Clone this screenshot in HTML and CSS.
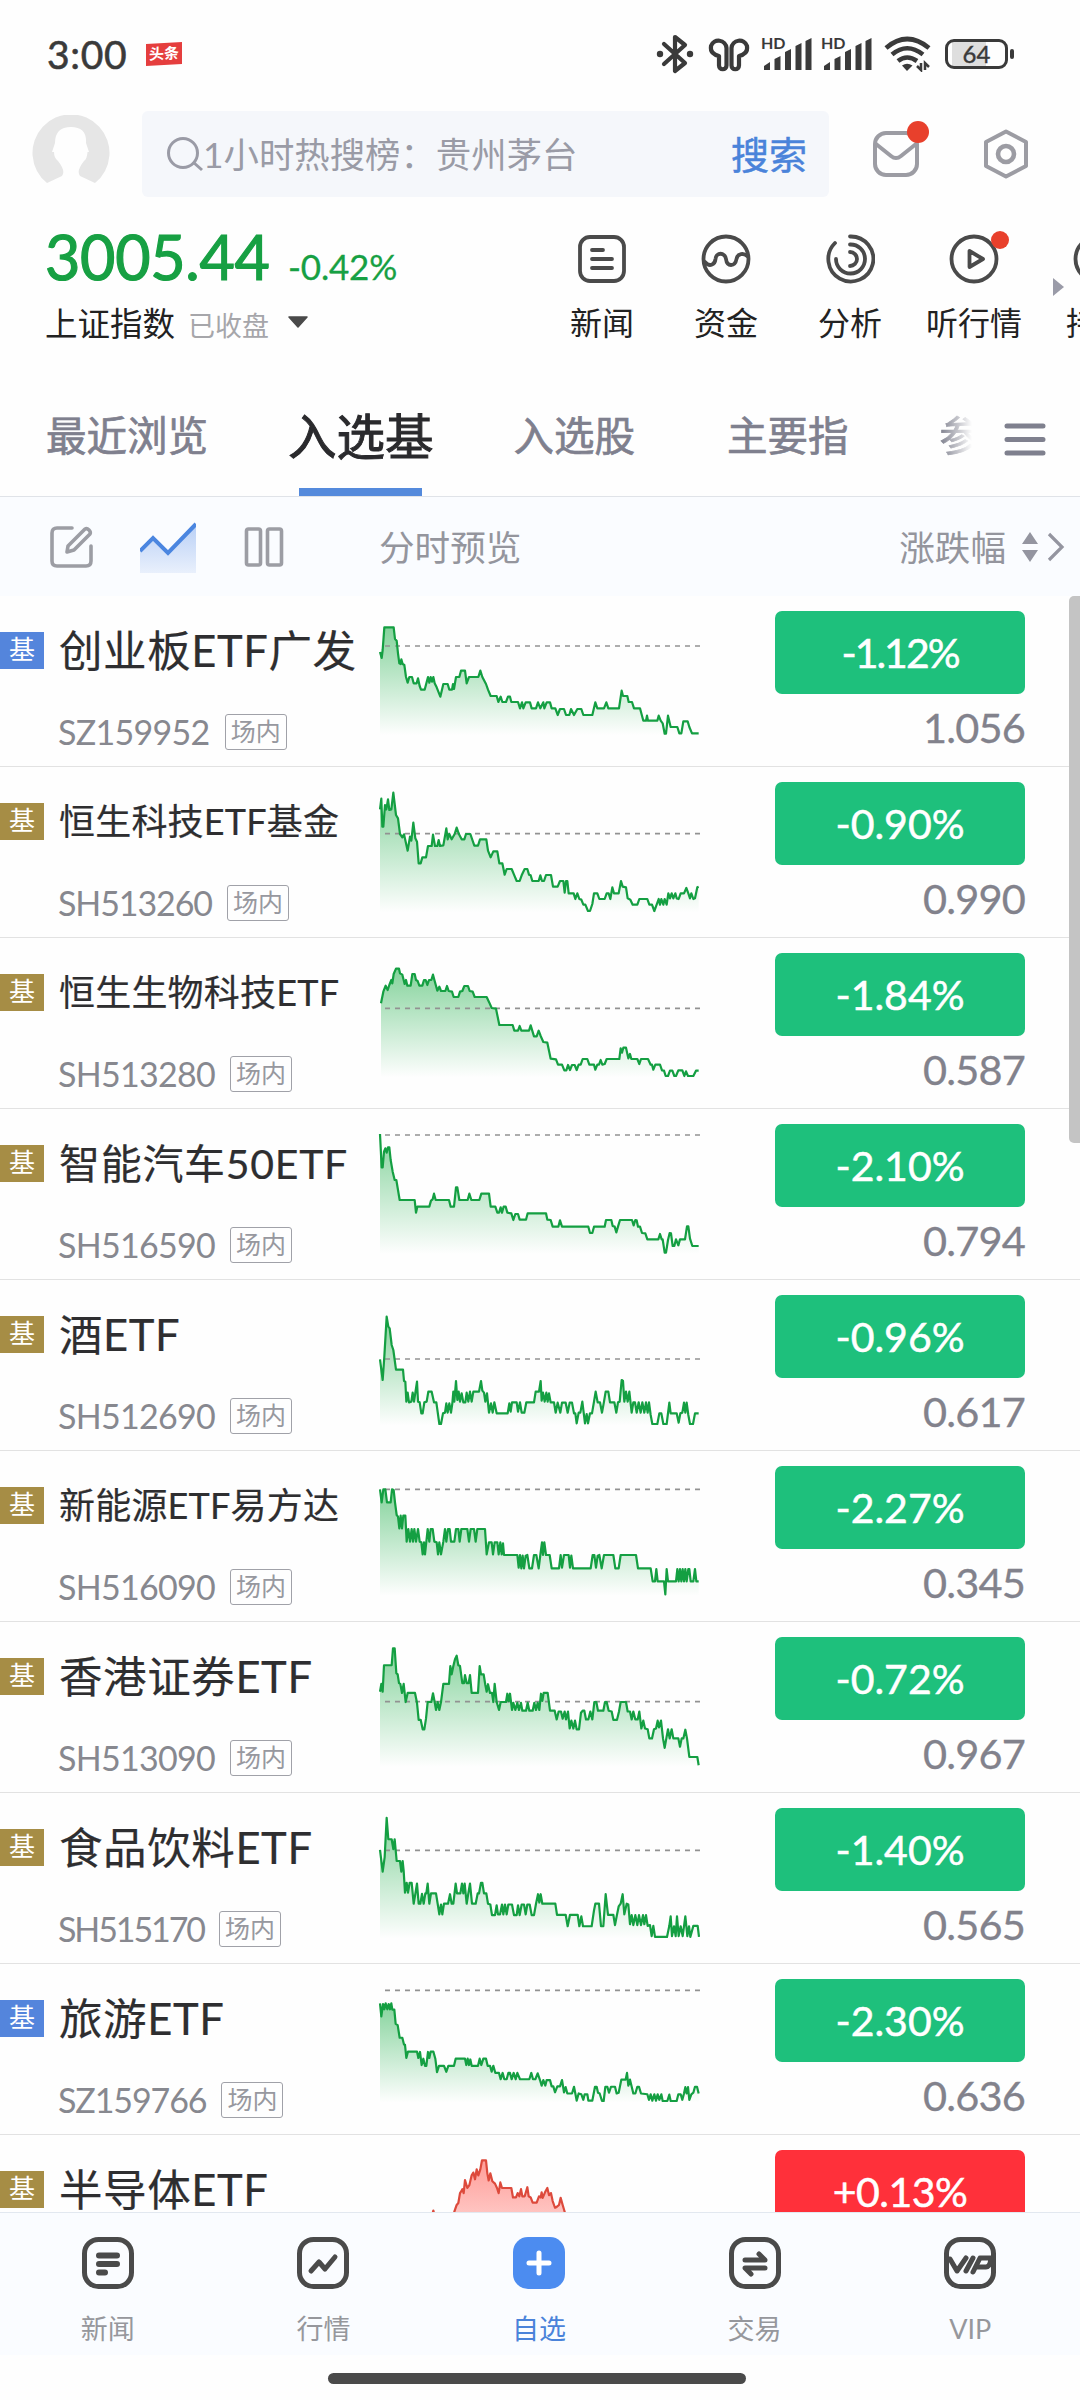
FILE: index.html
```html
<!DOCTYPE html>
<html lang="zh-CN">
<head>
<meta charset="utf-8">
<title>自选</title>
<link rel="stylesheet" href="styles.css">
</head>
<body>
<div class="app">
  <header class="status">
    <span class="time">3:00</span>
    <span class="news-tag">头条</span>
    <div class="status-icons">
      <svg class="bt" width="38" height="40" viewBox="0 0 38 40"><path d="M8 10 29 29 19 37V3l10 8L8 30" fill="none" stroke="#3a3a3a" stroke-width="4.2" stroke-linejoin="round" stroke-linecap="round"/><circle cx="4" cy="20" r="3.2" fill="#3a3a3a"/><circle cx="34" cy="20" r="3.2" fill="#3a3a3a"/></svg>
      <svg class="buds" width="42" height="36" viewBox="0 0 42 36"><g fill="none" stroke="#3a3a3a" stroke-width="4.2" stroke-linejoin="round"><path d="M18.5 12A8 8 0 0 0 3 10C2 16 6 19 11 20V29.500a3.700 3.700 0 0 0 7.500 0Z"/><path d="M23.500 12A8 8 0 0 1 39 10C40 16 36 19 31 20V29.500a3.700 3.700 0 0 1-7.500 0Z"/></g></svg>
      <div class="signal"><span>HD</span><svg width="50" height="34" viewBox="0 0 50 34"><path d="M2 33V29l6-4V33ZM12.500 33V22l6-3V33ZM23 33V15l6-3V33ZM33.500 33V9l6-3V33ZM43.500 33V4l6-3V33Z" fill="#3a3a3a"/></svg></div>
      <div class="signal"><span>HD</span><svg width="50" height="34" viewBox="0 0 50 34"><path d="M2 33V29l6-4V33ZM12.500 33V22l6-3V33ZM23 33V15l6-3V33ZM33.500 33V9l6-3V33ZM43.500 33V4l6-3V33Z" fill="#3a3a3a"/></svg></div>
      <svg class="wifi" width="48" height="36" viewBox="0 0 48 36"><g fill="none" stroke="#3a3a3a" stroke-width="4.600"><path d="M2 12Q23 -6 45 12"/><path d="M8 18.500Q23 6 39 18.500"/><path d="M14 25Q23 18 33 25"/></g><path d="M18 29.500Q23 26 28.500 29.500L23 35Z" fill="#3a3a3a"/><path d="M37 27v7l-4-4M41 34v-7l4 4" fill="none" stroke="#3a3a3a" stroke-width="2.500"/></svg>
      <div class="battery"><span>64</span></div>
    </div>
  </header>

  <div class="search-row">
    <svg class="avatar" width="78" height="78" viewBox="0 0 78 78"><path d="M15 68A38.500 38.500 0 1 1 63 68L48 61Q44 56 52 46Q55 44 55.500 37H57L54 28Q55 12 39 12Q23 12 23 28L20 37H22Q22 43 26 46Q34 56 30 61Z" fill="#e6e6e6"/></svg>
    <div class="search">
      <svg width="38" height="36" viewBox="0 0 38 36"><circle cx="17" cy="17" r="14.500" fill="none" stroke="#9a9ba6" stroke-width="3"/><path d="M27 26 36 34" stroke="#9a9ba6" stroke-width="3"/></svg>
      <span class="hint">1小时热搜榜：贵州茅台</span>
      <span class="go">搜索</span>
    </div>
    <div class="mail"><svg width="46" height="46" viewBox="0 0 46 46"><rect x="2" y="2" width="42" height="42" rx="11" fill="none" stroke="#9c9ca3" stroke-width="4"/><path d="M3 13 18 25Q23 29 28 25L43 13" fill="none" stroke="#9c9ca3" stroke-width="4"/></svg><i class="dot"></i></div>
    <svg class="hex" width="46" height="52" viewBox="0 0 46 52"><path d="M23 3.500 43 14V38L23 48.500 3 38V14Z" fill="none" stroke="#9c9ca3" stroke-width="4" stroke-linejoin="round"/><circle cx="23" cy="26" r="8" fill="none" stroke="#9c9ca3" stroke-width="4.600"/></svg>
  </div>

  <section class="overview">
    <div class="index">
      <div class="index-top"><b>3005.44</b><span>-0.42%</span></div>
      <div class="index-sub"><span>上证指数</span><em>已收盘</em><svg width="22" height="12" viewBox="0 0 22 12"><path d="M2 1H20L11 11Z" fill="#4a4a4a" stroke="#4a4a4a" stroke-width="1.500" stroke-linejoin="round"/></svg></div>
    </div>
    <nav class="quick">
      <a><svg width="50" height="50" viewBox="0 0 50 50"><rect x="3" y="3" width="44" height="44" rx="10"/><path d="M15 16h11M15 25h20M15 34h20"/></svg><span>新闻</span></a>
      <a><svg width="50" height="50" viewBox="0 0 50 50"><circle cx="25" cy="25" r="22.500"/><path d="M4 28C9 34 14 30 14.500 25C15 18 24 18 25 25C26 33 34 33 35.500 25C36.500 19 43 19 46 22"/></svg><span>资金</span></a>
      <a><svg width="50" height="50" viewBox="0 0 50 50"><path d="M10 9A22.500 22.500 0 1 0 25 2.500M11 25A14.500 14.500 0 1 0 25 10.500M25 18A7 7 0 1 1 25 32"/></svg><span>分析</span></a>
      <a><svg width="50" height="50" viewBox="0 0 50 50"><circle cx="25" cy="25" r="22.500"/><path d="M20.500 17V33L34 25Z" stroke-linejoin="round"/></svg><span>听行情</span><i class="dot small"></i></a>
      <a><svg width="50" height="50" viewBox="0 0 50 50"><circle cx="25" cy="25" r="22.500"/></svg><span>持仓</span></a>
      <svg class="more" width="14" height="22" viewBox="0 0 14 22"><path d="M1 2V20L12 11Z" fill="#9a9ba8"/></svg>
    </nav>
  </section>

  <nav class="tabs">
    <a class="recent">最近浏览</a>
    <a class="active">入选基</a>
    <a class="stocks">入选股</a>
    <a class="main-idx">主要指</a>
    <a class="fade">参</a>
    <svg width="42" height="34" viewBox="0 0 42 34"><path d="M3 4H39M3 17.500H39M3 31H39" stroke="#7f808e" stroke-width="5" stroke-linecap="round"/></svg>
  </nav>

  <div class="toolbar">
    <svg class="edit" width="46" height="46" viewBox="0 0 46 46"><g fill="none" stroke="#9c9da4" stroke-width="3.600" stroke-linecap="round" stroke-linejoin="round"><path d="M23 4H8Q3 4 3 9V37Q3 42 8 42H37Q42 42 42 37V22"/><path d="M19 22 36 5Q38 4 40 6T41 10L25 26L18 28Z"/></g></svg>
    <svg class="trend" width="56" height="52" viewBox="0 0 56 52"><defs><linearGradient id="trend-fill" x1="0" y1="0" x2="0" y2="1"><stop offset="0" stop-color="#b9d0f6"/><stop offset="1" stop-color="#e9f0fc"/></linearGradient></defs><path d="M0 30 13 17 28 32 56 4V52H0Z" fill="url(#trend-fill)"/><path d="M0 30 13 17 28 32 56 3" fill="none" stroke="#4b86e0" stroke-width="4"/></svg>
    <svg class="cols" width="40" height="40" viewBox="0 0 40 40"><g fill="none" stroke="#9c9da4" stroke-width="3.600"><rect x="2.500" y="2" width="14" height="36" rx="2"/><rect x="23.500" y="2" width="14" height="36" rx="2"/></g></svg>
    <span class="preview">分时预览</span>
    <span class="sort">涨跌幅</span>
    <svg class="arrows" width="44" height="32" viewBox="0 0 44 32"><path d="M9 1 17 13H1ZM9 31 17 19H1Z" fill="#9495a0"/><path d="M28 3 41 16 28 29" fill="none" stroke="#9495a0" stroke-width="3.200"/></svg>
  </div>

  <main class="list">
    <article class="row">
      <div class="info"><div class="title"><i class="sz">基</i><span class="xl">创业板ETF广发</span></div><div class="sub"><span>SZ159952</span><em>场内</em></div></div>
      <svg class="spark" viewBox="0 -12 1080 513" data-base="138" data-points="60,156 65,174 68,150 73,82 101,82 105,117 110,122 114,160 118,190 122,192 124,178 128,192 133,195 138,231 143,248 148,231 156,231 161,250 170,250 174,235 179,258 183,269 194,269 204,231 208,248 212,231 216,245 220,231 224,250 230,262 241,290 250,252 263,252 268,269 276,269 279,252 282,267 288,231 298,231 303,212 315,212 320,250 327,231 355,231 361,212 367,231 378,252 384,269 392,288 410,288 415,306 422,290 427,306 438,306 444,290 450,290 454,306 474,306 480,325 486,307 490,325 497,307 510,307 515,325 528,325 534,307 541,325 550,307 553,325 560,307 570,307 575,325 586,325 593,345 600,327 612,327 618,345 628,345 633,327 642,345 652,327 664,327 670,345 697,345 706,307 712,325 732,325 739,307 745,325 777,325 785,272 789,288 802,288 806,306 816,306 822,325 840,325 850,362 858,362 861,347 864,362 892,362 896,347 902,362 908,370 914,401 918,401 924,347 932,381 952,381 958,400 964,400 970,364 983,364 988,381 996,400 1016,400"></svg>
      <div class="quote"><b class="tight">-1.12%</b><span>1.056</span></div>
    </article>
    <article class="row">
      <div class="info"><div class="title"><i>基</i><span class="md">恒生科技ETF基金</span></div><div class="sub"><span class="snug">SH513260</span><em>场内</em></div></div>
      <svg class="spark" viewBox="0 501 1080 513" data-base="701" data-points="60,628 64,596 67,680 70,680 75,615 79,628 84,598 88,630 94,628 100,578 108,645 114,655 120,702 127,712 132,703 143,752 150,710 154,722 160,668 166,715 171,725 176,790 182,790 187,772 198,772 204,738 215,738 219,704 225,738 232,738 236,720 240,738 250,736 259,685 263,718 268,702 275,718 284,702 290,683 297,703 305,718 313,718 318,702 331,702 343,737 354,737 360,718 379,718 384,752 392,772 400,754 412,754 418,790 427,790 434,824 440,807 455,807 462,824 470,843 479,843 485,826 494,807 502,807 507,824 512,826 517,843 536,843 541,826 546,843 552,843 558,825 573,825 579,860 593,860 600,843 610,843 614,878 618,843 622,843 626,880 641,880 646,897 652,880 658,897 664,899 670,914 676,914 684,933 690,933 697,912 702,880 712,880 718,897 734,897 740,880 746,880 751,897 757,862 762,880 776,880 783,843 788,860 798,862 803,895 811,899 818,914 832,914 838,897 862,897 868,914 876,914 883,933 890,914 896,897 900,914 904,897 910,914 914,897 920,914 925,880 930,895 935,880 940,895 946,880 950,895 956,897 962,880 972,880 979,864 985,880 990,895 994,880 1000,897 1005,895 1012,862 1016,860"></svg>
      <div class="quote"><b>-0.90%</b><span>0.990</span></div>
    </article>
    <article class="row">
      <div class="info"><div class="title"><i>基</i><span class="md">恒生生物科技ETF</span></div><div class="sub"><span>SH513280</span><em>场内</em></div></div>
      <svg class="spark" viewBox="0 1014 1080 513" data-base="1225" data-points="63,1210 70,1175 77,1157 83,1170 88,1155 94,1140 97,1150 101,1122 108,1106 117,1106 120,1120 127,1124 134,1152 138,1140 142,1157 152,1157 157,1122 164,1122 168,1140 173,1143 178,1157 187,1157 192,1140 197,1140 202,1155 207,1140 214,1140 219,1124 224,1143 232,1172 238,1160 243,1173 256,1173 261,1158 266,1173 276,1175 281,1191 295,1191 300,1175 307,1173 313,1158 324,1158 329,1173 338,1175 344,1191 380,1191 388,1208 395,1224 408,1226 418,1275 458,1275 463,1292 474,1292 479,1278 484,1292 507,1292 512,1276 522,1309 530,1309 536,1292 542,1308 550,1326 562,1328 572,1376 588,1378 594,1394 606,1394 613,1411 619,1411 624,1395 630,1410 636,1395 644,1395 650,1410 656,1394 662,1394 668,1377 682,1377 688,1394 702,1394 706,1409 712,1394 717,1394 722,1380 727,1394 734,1392 740,1377 778,1377 782,1345 786,1358 790,1343 798,1343 805,1375 810,1362 814,1377 832,1377 838,1392 843,1377 864,1377 872,1394 876,1394 880,1409 886,1394 900,1394 906,1411 912,1412 917,1428 924,1428 930,1412 937,1412 943,1428 948,1428 955,1411 967,1411 973,1428 978,1414 984,1428 1000,1428 1008,1412 1016,1412"></svg>
      <div class="quote"><b>-1.84%</b><span>0.587</span></div>
    </article>
    <article class="row">
      <div class="info"><div class="title"><i>基</i><span class="lg">智能汽车50ETF</span></div><div class="sub"><span>SH516590</span><em>场内</em></div></div>
      <svg class="spark" viewBox="0 27 1080 513" data-base="105" data-points="60,102 65,202 68,202 72,155 76,145 80,158 84,142 88,142 92,180 98,215 104,240 109,240 119,300 164,300 168,338 172,320 208,320 213,302 218,298 222,281 227,300 267,300 272,320 282,320 288,262 292,262 298,300 323,300 328,281 334,300 358,300 364,281 387,281 392,320 406,320 412,338 417,338 422,322 426,338 431,320 437,320 442,338 454,340 460,360 466,342 474,342 479,359 498,359 503,340 558,340 562,359 572,360 578,380 595,380 600,361 606,380 685,380 690,399 697,399 702,380 734,380 738,360 754,360 758,378 764,380 769,397 774,380 780,360 816,360 821,376 826,360 830,361 834,380 840,380 846,399 856,400 862,418 895,418 900,402 905,418 908,418 914,458 918,458 924,420 929,399 933,400 938,438 943,438 948,418 955,436 960,418 975,418 981,379 985,379 990,416 997,438 1016,438"></svg>
      <div class="quote"><b>-2.10%</b><span>0.794</span></div>
    </article>
    <article class="row">
      <div class="info"><div class="title"><i>基</i><span class="xl">酒ETF</span></div><div class="sub"><span>SH512690</span><em>场内</em></div></div>
      <svg class="spark" viewBox="0 540 1080 513" data-base="777" data-points="60,778 68,840 73,770 80,650 85,680 89,685 95,735 100,750 108,809 129,809 132,843 136,845 139,905 143,878 147,907 154,905 158,878 162,905 171,845 174,905 179,907 184,940 188,940 193,907 200,905 205,875 215,875 222,907 229,907 238,972 243,972 249,940 255,938 259,910 263,938 268,910 273,938 277,910 280,875 283,905 288,843 292,900 296,875 300,905 305,880 310,907 316,907 320,878 325,905 330,875 335,905 340,875 357,875 363,843 367,872 372,878 376,905 381,880 387,938 393,910 398,938 403,907 410,940 443,940 448,910 452,935 456,907 470,907 474,935 480,907 485,938 493,938 499,907 522,907 527,875 537,875 542,843 545,902 549,878 554,905 559,878 563,905 567,880 572,907 582,907 587,938 593,908 601,938 606,908 617,908 623,938 629,908 636,908 642,940 646,940 650,970 656,938 661,938 667,905 671,938 675,970 680,942 684,970 690,940 696,940 702,905 707,875 713,907 720,907 726,938 732,905 737,875 745,875 750,907 763,907 769,938 774,907 779,905 785,840 789,843 793,905 798,875 803,905 808,875 815,938 820,907 825,907 830,938 836,907 842,938 847,907 853,938 858,907 863,938 867,907 872,945 877,972 892,972 898,940 904,940 910,972 920,972 928,908 932,940 950,940 956,968 961,940 967,938 972,908 976,938 980,908 985,945 990,972 999,972 1005,940 1016,940"></svg>
      <div class="quote"><b>-0.96%</b><span>0.617</span></div>
    </article>
    <article class="row">
      <div class="info"><div class="title"><i>基</i><span class="md">新能源ETF易方达</span></div><div class="sub"><span>SH516090</span><em>场内</em></div></div>
      <svg class="spark" viewBox="0 1053 1080 513" data-base="1168" data-points="60,1168 65,1207 70,1168 76,1168 81,1207 92,1207 96,1168 101,1170 105,1207 110,1245 114,1250 118,1285 122,1247 126,1285 130,1247 136,1247 140,1325 145,1287 150,1325 155,1287 159,1325 163,1287 168,1325 174,1287 179,1325 184,1327 188,1363 192,1327 195,1363 203,1287 208,1325 212,1287 218,1287 223,1325 230,1327 234,1363 238,1327 243,1363 250,1325 255,1287 259,1325 264,1287 269,1287 273,1325 283,1325 288,1287 295,1287 299,1325 304,1287 322,1287 327,1325 332,1287 342,1287 347,1325 352,1287 375,1287 380,1363 387,1327 395,1327 399,1363 404,1327 412,1327 416,1363 421,1327 425,1363 429,1330 432,1365 472,1365 476,1403 480,1365 484,1405 488,1367 492,1405 497,1367 502,1365 508,1405 516,1405 522,1365 529,1365 536,1405 541,1365 546,1327 549,1365 553,1327 558,1365 569,1365 575,1405 597,1405 602,1365 606,1403 612,1365 626,1365 630,1403 634,1367 639,1405 692,1405 698,1365 703,1365 708,1403 713,1367 718,1365 725,1405 732,1365 760,1365 766,1405 776,1405 782,1365 828,1365 834,1405 872,1405 878,1444 885,1444 889,1407 893,1444 912,1444 916,1483 920,1407 924,1444 948,1444 952,1407 956,1444 960,1407 964,1444 968,1407 972,1444 976,1407 980,1444 985,1407 988,1407 992,1444 1000,1444 1005,1407 1009,1444 1016,1444"></svg>
      <div class="quote"><b>-2.27%</b><span>0.345</span></div>
    </article>
    <article class="row">
      <div class="info"><div class="title"><i>基</i><span class="xl">香港证券ETF</span></div><div class="sub"><span>SH513090</span><em>场内</em></div></div>
      <svg class="spark" viewBox="0 55.6 1080 432.5" data-base="257" data-points="60,232 64,212 68,232 72,165 95,165 99,122 104,122 109,185 113,188 117,210 121,212 126,235 131,212 137,258 143,235 165,235 171,260 176,303 182,303 188,327 193,327 198,300 203,258 214,258 219,236 224,258 228,278 233,258 238,278 243,258 250,212 267,212 271,167 275,188 280,167 285,150 290,141 295,165 300,167 307,210 312,210 315,190 320,210 326,210 330,190 335,235 354,235 359,167 363,188 371,188 376,215 380,232 384,213 390,235 396,235 400,258 404,212 410,258 417,278 422,258 438,258 442,237 446,256 450,237 456,278 460,260 466,278 472,260 477,278 483,260 487,280 498,280 503,260 508,280 518,280 523,260 528,278 533,260 538,278 543,237 547,255 551,235 563,235 570,280 584,280 590,302 596,282 603,282 608,300 614,282 618,302 624,282 629,325 634,305 640,325 645,305 650,327 657,327 663,285 668,280 673,280 678,302 685,302 691,282 697,302 703,258 709,258 714,280 730,280 735,258 740,258 746,280 755,282 760,303 771,303 777,282 782,258 798,258 803,282 810,282 815,302 820,282 826,302 833,302 838,282 844,325 850,305 855,325 863,327 868,350 876,350 882,327 888,325 893,305 897,322 903,305 909,350 914,374 919,350 924,327 929,350 935,327 940,350 944,350 955,350 960,371 965,350 970,350 976,328 981,350 988,397 1012,397 1016,418"></svg>
      <div class="quote"><b>-0.72%</b><span>0.967</span></div>
    </article>
    <article class="row">
      <div class="info"><div class="title"><i>基</i><span class="xl">食品饮料ETF</span></div><div class="sub"><span class="narrow">SH515170</span><em>场内</em></div></div>
      <svg class="spark" viewBox="0 488 1080 432.5" data-base="633" data-points="60,632 68,687 74,650 80,551 85,605 95,605 100,630 104,605 110,660 120,660 124,687 128,660 131,685 135,740 140,715 144,740 149,715 155,715 161,768 166,743 171,717 176,768 181,768 186,743 191,768 196,742 199,742 203,717 208,768 213,742 228,742 233,768 238,795 243,770 247,795 252,768 264,768 270,744 275,768 280,768 287,717 291,742 301,742 306,717 310,742 314,717 320,768 325,742 330,717 336,768 347,768 353,742 357,742 363,715 367,715 372,742 379,742 384,768 391,770 396,797 405,797 410,772 414,795 420,795 426,770 430,795 435,770 440,795 445,770 456,770 462,797 470,797 474,772 479,797 485,770 492,770 497,795 502,770 509,770 515,797 522,797 528,768 534,744 538,765 542,744 547,768 586,768 591,796 617,796 623,825 630,796 653,796 658,825 664,800 669,825 695,825 702,785 706,768 717,768 723,825 730,825 737,744 744,796 760,796 765,822 770,800 776,775 782,768 788,744 793,795 800,768 805,770 810,820 815,797 820,822 826,797 832,822 837,797 843,822 849,797 853,820 858,797 863,824 870,822 875,850 880,824 885,852 921,852 928,824 932,800 936,850 942,825 947,850 951,800 956,850 962,825 968,850 976,800 982,850 987,825 991,852 1000,824 1013,824 1017,852"></svg>
      <div class="quote"><b>-1.40%</b><span>0.565</span></div>
    </article>
    <article class="row">
      <div class="info"><div class="title"><i class="sz">基</i><span class="xl">旅游ETF</span></div><div class="sub"><span class="snug">SZ159766</span><em>场内</em></div></div>
      <svg class="spark" viewBox="0 920.5 1080 432.5" data-base="987" data-points="60,1020 64,1053 69,1022 73,1035 77,1020 82,1035 86,1022 90,1035 94,1020 97,1036 103,1036 107,1072 113,1075 119,1107 127,1107 132,1124 135,1125 139,1158 144,1142 171,1142 175,1158 180,1143 185,1176 190,1160 195,1178 199,1178 204,1143 208,1158 212,1142 220,1142 226,1160 231,1194 237,1178 252,1178 259,1193 265,1178 282,1178 287,1160 315,1160 319,1176 323,1160 327,1176 331,1162 335,1178 354,1178 359,1160 364,1176 370,1160 378,1160 383,1178 390,1178 395,1193 400,1178 406,1196 417,1196 422,1212 428,1196 433,1212 440,1212 445,1196 450,1196 455,1212 461,1196 467,1212 472,1196 480,1212 508,1212 514,1196 519,1212 526,1212 533,1197 540,1214 545,1228 550,1214 556,1228 560,1214 570,1214 575,1230 580,1230 585,1245 592,1230 600,1230 606,1214 612,1245 617,1232 622,1248 636,1248 642,1231 646,1248 650,1266 656,1248 664,1250 670,1264 674,1250 682,1250 685,1266 697,1266 705,1231 710,1231 714,1246 719,1248 726,1267 731,1267 736,1231 742,1231 747,1246 753,1231 765,1231 770,1248 776,1246 784,1213 797,1213 801,1196 805,1228 810,1213 820,1248 826,1248 832,1231 837,1231 843,1248 862,1250 867,1264 872,1250 877,1266 883,1250 888,1266 893,1250 898,1264 904,1250 908,1267 922,1267 928,1251 932,1267 950,1267 955,1250 962,1250 967,1264 972,1248 976,1232 980,1248 984,1232 988,1264 994,1250 1000,1246 1005,1231 1011,1231 1016,1248"></svg>
      <div class="quote"><b>-2.30%</b><span>0.636</span></div>
    </article>
    <article class="row">
      <div class="info"><div class="title"><i>基</i><span class="xl">半导体ETF</span></div></div>
      <svg class="spark up" viewBox="0 1353 1080 432.5" data-points="215,1560 220,1544 225,1560 275,1560 283,1547 290,1530 295,1525 300,1500 304,1495 307,1490 311,1500 315,1467 322,1487 328,1480 335,1455 340,1448 345,1465 350,1440 355,1455 361,1440 366,1417 378,1417 382,1450 386,1468 391,1450 397,1470 405,1476 411,1487 416,1500 421,1473 426,1487 454,1487 459,1511 468,1511 473,1500 478,1508 483,1490 487,1508 494,1508 502,1485 506,1508 512,1511 518,1524 530,1524 537,1508 542,1511 545,1498 548,1512 555,1498 562,1487 567,1505 573,1500 578,1520 585,1537 590,1535 597,1530 602,1512 608,1530 614,1547 620,1570"></svg>
      <div class="quote up"><b>+0.13%</b></div>
    </article>
    <i class="scrollbar"></i>
  </main>

  <nav class="bottom">
    <a><svg width="54" height="54" viewBox="0 0 54 54"><rect x="3.500" y="3.500" width="47" height="47" rx="14"/><path d="M18 19.500h18M18 28h18M18 36.500h6" class="thick"/></svg><span>新闻</span></a>
    <a><svg width="54" height="54" viewBox="0 0 54 54"><rect x="3.500" y="3.500" width="47" height="47" rx="14"/><path d="M15 35 23 26 29 33 39 21"/></svg><span>行情</span></a>
    <a class="on"><svg width="54" height="54" viewBox="0 0 54 54"><rect x="1" y="1" width="52" height="52" rx="15"/><path d="M27 17V37M17 27H37"/></svg><span>自选</span></a>
    <a><svg width="54" height="54" viewBox="0 0 54 54"><rect x="3.500" y="3.500" width="47" height="47" rx="14"/><path d="M17 24H37L31 18M37 32H17L23 38"/></svg><span>交易</span></a>
    <a><svg width="54" height="54" viewBox="0 0 54 54"><rect x="3.500" y="3.500" width="47" height="47" rx="14"/><path d="M4 23H7L14 35 23 22M23 35 30 22M30 36 37 22H48Q47 31 43 31H35"/></svg><span>VIP</span></a>
  </nav>
  <div class="home"><i></i></div>
</div>
<script src="script.js"></script>
</body>
</html>
```
FILE: styles.css
```css
* { box-sizing: border-box; }
body {
  margin: 0;
  background: #fefefe;
  color: #2e2e30;
  font-family: Lato, "Noto Sans CJK SC", sans-serif;
}
i, em { font-style: normal; }
svg { display: block; flex: none; }
.app { width: 1080px; height: 2400px; display: flex; flex-direction: column; overflow: hidden; }
.app > * { flex: none; }

.status { height: 108px; padding: 0 72px 0 47px; display: flex; align-items: center; }
.time { width: 99px; font-size: 39px; letter-spacing: 0.7px; color: #3a3a3a; -webkit-text-stroke: 0.6px #3a3a3a; }
.news-tag { width: 36px; height: 22px; background: #e53e3e; color: #fff; font-size: 15px; line-height: 21px; text-align: center; font-weight: 700; transform: skewY(-3deg); }
.status-icons { margin-left: auto; display: flex; align-items: center; }
.buds { margin-left: 14px; }
.signal { width: 50px; height: 34px; margin-left: 12px; position: relative; }
.signal + .signal { margin-left: 10px; }
.signal span { position: absolute; left: -1px; top: -2px; z-index: 1; height: 14px; font-size: 16px; line-height: 16px; font-weight: 700; color: #3a3a3a; }
.wifi { margin-left: 12px; }
.battery { position: relative; width: 63px; height: 30px; margin-left: 13px; border: 3px solid #3a3a3a; border-radius: 9px; background: linear-gradient(90deg, transparent 4px, #dedede 4px, #dedede 38px, transparent 38px); }
.battery span { display: block; text-align: center; font-size: 24px; line-height: 23px; color: #3a3a3a; -webkit-text-stroke: 0.4px #3a3a3a; }
.battery::after { content: ""; position: absolute; right: -9px; top: 7px; width: 4px; height: 10px; border-radius: 2px; background: #3a3a3a; }

.search-row { height: 92px; display: flex; align-items: center; padding: 0 50px 0 32px; }
.search { width: 687px; height: 86px; margin-left: 32px; padding: 0 22px 0 24px; border-radius: 6px; background: #f5f7fb; display: flex; align-items: center; }
.hint { margin: -4px 0 0 -1px; font-size: 35.4px; color: #9a9ba6; white-space: nowrap; }
.go { margin: -4px 0 0 auto; font-size: 38px; color: #4a83da; -webkit-text-stroke: 0.5px #4a83da; }
.mail { position: relative; margin-left: 44px; }
.dot { position: absolute; right: -10px; top: -10px; width: 22px; height: 22px; border-radius: 50%; background: #e8402c; }
.hex { margin-left: 64px; }

.overview { height: 180px; display: flex; }
.index { width: 540px; padding: 21px 0 0 45px; color: #222; }
.index-top { display: flex; align-items: baseline; height: 72px; line-height: 72px; color: #17a043; }
.index-top b { width: 243px; font-size: 61px; font-weight: 400; letter-spacing: -0.3px; -webkit-text-stroke: 1.2px #17a043; }
.index-top span { font-size: 35px; letter-spacing: -0.2px; -webkit-text-stroke: 0.3px #17a043; }
.index-sub { display: flex; align-items: center; height: 56px; font-size: 32.500px; }
.index-sub em { margin: 6px 18px 0 13px; font-size: 27px; color: #a6a6aa; }
.index-sub svg { margin-top: 2px; }
.quick { position: relative; width: 540px; display: flex; overflow: hidden; padding-top: 34px; }
.quick a { position: relative; flex: none; width: 124px; display: flex; flex-direction: column; align-items: center; font-size: 32px; line-height: 44px; color: #222; }
.quick a > svg { fill: none; stroke: #4a4a4a; stroke-width: 3.800; stroke-linecap: round; margin-bottom: 17px; }
.quick span { white-space: nowrap; }
.dot.small { width: 18px; height: 18px; right: 27px; top: -3px; }
.more { position: absolute; right: 14px; top: 76px; }

.tabs { height: 117px; border-bottom: 1px solid #e0e3e8; display: flex; align-items: center; padding: 0 34px 0 46px; font-size: 40.500px; color: #7f808e; }
.tabs a { flex: none; height: 116px; line-height: 112px; -webkit-text-stroke: 0.7px currentColor; white-space: nowrap; }
.tabs .active { position: relative; margin-left: 80px; font-size: 48.5px; color: #2a2a2d; -webkit-text-stroke-width: 1px; }
.tabs .active::after { content: ""; position: absolute; left: 11px; bottom: 0; width: 123px; height: 8px; background: #548adc; }
.tabs .stocks { margin-left: 80px; }
.tabs .main-idx { margin-left: 92px; }
.tabs .fade { margin-left: 91px; -webkit-mask-image: linear-gradient(90deg, #000 0, transparent 32px); mask-image: linear-gradient(90deg, #000 0, transparent 32px); }
.tabs svg { margin: 2px 0 0 auto; }

.toolbar { height: 99px; padding: 0 15px 0 49px; display: flex; align-items: center; background: #fafcff; color: #94959d; font-size: 35.6px; }
.trend { margin-left: 45px; }
.cols { margin-left: 48px; }
.preview { margin: -3px 0 0 95px; }
.sort { margin: -3px 0 0 auto; }
.arrows { margin-left: 15px; }

.list { position: relative; height: 1616px; overflow: hidden; }
.row { height: 171px; display: flex; border-bottom: 1px solid #e2e2e2; }
.info { width: 360px; padding-top: 24px; }
.title { height: 60px; display: flex; align-items: center; white-space: nowrap; }
.title span { margin-top: -4px; -webkit-text-stroke: 0.2px #2e2e30; }
.title i { width: 44px; height: 37px; margin-right: 15px; flex: none; background: #a68d45; color: #fff; font-size: 26px; line-height: 35px; text-align: center; }
.title i.sz { background: #5485dc; }
.xl { font-size: 43.500px; letter-spacing: 0.6px; }
.lg { font-size: 41px; letter-spacing: 0.7px; }
.md { font-size: 36px; letter-spacing: 0.2px; }
.sub { height: 40px; margin-top: 32px; padding-left: 58px; display: flex; align-items: center; color: #87888f; }
.sub span { margin-top: -2px; font-size: 34px; letter-spacing: -0.7px; }
.sub .snug { letter-spacing: -1.1px; }
.sub .narrow { letter-spacing: -2.100px; }
.sub em { width: 62px; height: 36px; margin-left: 15px; border: 1.500px solid #a0a1a8; border-radius: 3px; text-align: center; font-size: 25px; line-height: 32px; color: #97989f; }
.spark { width: 360px; height: 171px; overflow: hidden; }
.spark path { vector-effect: non-scaling-stroke; }
.spark .base { fill: none; stroke: #929292; stroke-width: 1.700; }
.spark .line { fill: none; stroke: #149f42; stroke-width: 2.200; stroke-linejoin: round; }
.spark.up .line { stroke: #dd4a3c; }
.quote { width: 250px; margin-left: 55px; padding-top: 15px; display: flex; flex-direction: column; }
.quote b { height: 83px; border-radius: 7px; background: #1ec07c; color: #fff; font-size: 41px; font-weight: 400; -webkit-text-stroke: 0.5px #fff; line-height: 83px; text-align: center; letter-spacing: 0; }
.quote b.tight { letter-spacing: -2px; }
.quote.up b { background: #ff303a; letter-spacing: -0.5px; }
.quote span { margin-top: 13px; font-size: 41.500px; line-height: 40px; text-align: right; color: #82828c; letter-spacing: -0.8px; -webkit-text-stroke: 0.3px #82828c; }
.scrollbar { position: absolute; right: 0; top: 0; width: 11px; height: 547px; border-radius: 5px 0 0 5px; background: #c4c4c4; }

.bottom { height: 143px; display: flex; border-top: 1px solid #e2e8f0; background: #fafcff; }
.bottom a { width: 215.600px; padding-top: 23px; display: flex; flex-direction: column; align-items: center; font-size: 27px; line-height: 34px; color: #96979c; }
.bottom svg { fill: none; stroke: #4a4a4a; stroke-width: 5; stroke-linecap: round; stroke-linejoin: round; margin-bottom: 22px; }
.bottom .thick { stroke-width: 6; }
.bottom .on { color: #4a83da; }
.bottom .on rect { fill: #4c8cf0; stroke: none; }
.bottom .on path { stroke: #fff; }
.home { height: 45px; display: flex; justify-content: center; padding-top: 18px; }
.home i { width: 418px; height: 11px; margin-right: 6px; border-radius: 6px; background: #4a4a4a; }
```
FILE: script.js
```js
// Draws each intraday sparkline (area, previous-close line, price line) from its data attributes.
const NS = 'http://www.w3.org/2000/svg';
document.querySelectorAll('.spark').forEach((svg, n) => {
  const add = (parent, name, attrs) => {
    const el = document.createElementNS(NS, name);
    for (const key in attrs) el.setAttribute(key, attrs[key]);
    return parent.appendChild(el);
  };
  svg.setAttribute('preserveAspectRatio', 'none');
  const up = svg.classList.contains('up');
  const pts = svg.dataset.points.split(' ').map(p => p.split(',').map(Number));
  const ys = pts.map(p => p[1]);
  const top = Math.min(...ys);
  const bottom = up ? top + 330 : Math.max(...ys) + 4;
  const grad = add(svg, 'linearGradient', { id: 'area' + n, gradientUnits: 'userSpaceOnUse', x1: 0, x2: 0, y1: top, y2: bottom });
  add(grad, 'stop', { offset: 0, 'stop-color': up ? '#ff9d98' : '#85d39c' });
  add(grad, 'stop', { offset: 1, 'stop-color': up ? '#ff9d98' : '#85d39c', 'stop-opacity': 0 });
  const line = 'M' + svg.dataset.points.replace(/ /g, 'L');
  const last = pts[pts.length - 1][0];
  add(svg, 'path', { d: line + 'V' + bottom + 'H' + pts[0][0] + 'Z', fill: 'url(#area' + n + ')' });
  if (svg.dataset.base) {
    add(svg, 'path', { class: 'base', d: 'M75,' + svg.dataset.base + 'H1020', 'stroke-dasharray': '5 5' });
  }
  add(svg, 'path', { class: 'line', d: line });
});
```
